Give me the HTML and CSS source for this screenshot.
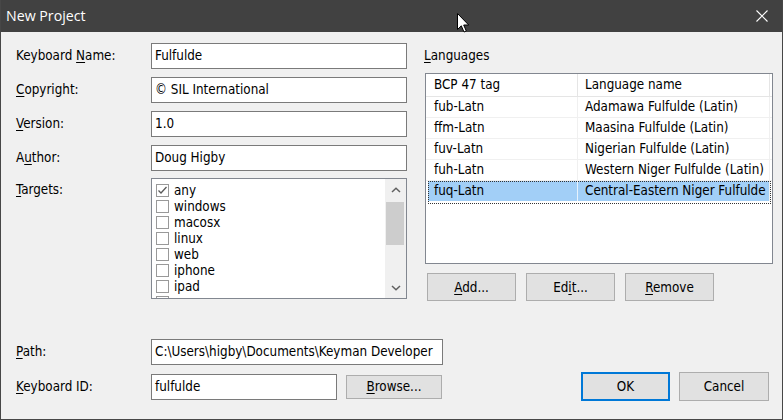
FILE: index.html
```html
<!DOCTYPE html>
<html>
<head>
<meta charset="utf-8">
<title>New Project</title>
<link rel="stylesheet" href="styles.css">
</head>
<body>
<div class="window">
  <div class="titlebar">
    <span class="title">New Project</span>
    <svg class="close" width="12" height="12" viewBox="0 0 12 12"><path d="M0.5 0.5 L11.5 11.5 M11.5 0.5 L0.5 11.5" stroke="#ffffff" stroke-width="1.1" fill="none"/></svg>
    <svg class="cursor" width="13" height="20" viewBox="0 0 13 20"><path d="M0.5 0.5 L0.5 16.5 L4.3 12.8 L7 19 L9.3 18 L6.7 12 L11.7 12 Z" fill="#ffffff" stroke="#000000" stroke-width="1" stroke-linejoin="miter"/></svg>
  </div>
  <div class="content">
    <div class="top">
      <div class="form">
        <div class="lbl">Keyboard <u>N</u>ame:</div>
        <div class="input">Fulfulde</div>
        <div class="lbl"><u>C</u>opyright:</div>
        <div class="input">© SIL International</div>
        <div class="lbl"><u>V</u>ersion:</div>
        <div class="input">1.0</div>
        <div class="lbl">A<u>u</u>thor:</div>
        <div class="input">Doug Higby</div>
        <div class="lbl lbl-top"><u>T</u>argets:</div>
        <div class="checklist">
          <div class="items">
            <div class="item"><span class="cb"><svg width="11" height="11" viewBox="0 0 11 11"><path d="M1.5 5.5 L4 8 L9.5 2" stroke="#5a5a5a" stroke-width="1.3" fill="none"/></svg></span>any</div>
            <div class="item"><span class="cb"></span>windows</div>
            <div class="item"><span class="cb"></span>macosx</div>
            <div class="item"><span class="cb"></span>linux</div>
            <div class="item"><span class="cb"></span>web</div>
            <div class="item"><span class="cb"></span>iphone</div>
            <div class="item"><span class="cb"></span>ipad</div>
            <div class="item"><span class="cb"></span></div>
          </div>
          <div class="scrollbar">
            <div class="sb-btn"><svg width="10" height="6" viewBox="0 0 10 6"><path d="M1 5 L5 1.2 L9 5" stroke="#606060" stroke-width="1.5" fill="none"/></svg></div>
            <div class="thumb"></div>
            <div class="sb-space"></div>
            <div class="sb-btn"><svg width="10" height="6" viewBox="0 0 10 6"><path d="M1 1 L5 4.8 L9 1" stroke="#606060" stroke-width="1.5" fill="none"/></svg></div>
          </div>
        </div>
      </div>
      <div class="langs">
        <div class="lbl"><u>L</u>anguages</div>
        <div class="listview">
          <div class="row head"><div class="c1">BCP 47 tag</div><div class="c2">Language name</div></div>
          <div class="row"><div class="c1">fub-Latn</div><div class="c2">Adamawa Fulfulde (Latin)</div></div>
          <div class="row"><div class="c1">ffm-Latn</div><div class="c2">Maasina Fulfulde (Latin)</div></div>
          <div class="row"><div class="c1">fuv-Latn</div><div class="c2">Nigerian Fulfulde (Latin)</div></div>
          <div class="row"><div class="c1">fuh-Latn</div><div class="c2">Western Niger Fulfulde (Latin)</div></div>
          <div class="row sel"><div class="c1">fuq-Latn</div><div class="c2">Central-Eastern Niger Fulfulde</div></div>
        </div>
        <div class="btnrow">
          <div class="btn"><span><u>A</u>dd...</span></div>
          <div class="btn"><span>Ed<u>i</u>t...</span></div>
          <div class="btn"><span><u>R</u>emove</span></div>
        </div>
      </div>
    </div>
    <div class="bottom">
      <div class="brow">
        <div class="lbl"><u>P</u>ath:</div>
        <div class="input path">C:\Users\higby\Documents\Keyman Developer</div>
      </div>
      <div class="brow brow2">
        <div class="lbl"><u>K</u>eyboard ID:</div>
        <div class="input kid">fulfulde</div>
        <div class="btn browse"><span><u>B</u>rowse...</span></div>
        <div class="btn ok"><span>OK</span></div>
        <div class="btn cancel"><span>Cancel</span></div>
      </div>
    </div>
  </div>
</div>
</body>
</html>
```
FILE: styles.css
```css
* { box-sizing: border-box; }
html, body { margin: 0; padding: 0; }
body {
  width: 783px;
  height: 420px;
  overflow: hidden;
  background: #f0f0f0;
  font-family: "DejaVu Sans Condensed", "DejaVu Sans", sans-serif;
  font-size: 13.33px;
  color: #000;
}
u { text-decoration: underline; text-underline-offset: 2px; }
.window {
  width: 783px;
  height: 420px;
  display: flex;
  flex-direction: column;
  border: 1px solid #474747;
  border-top: none;
  background: #f0f0f0;
}
.titlebar {
  height: 32px;
  flex-shrink: 0;
  background: #414141;
  position: relative;
  display: flex;
  align-items: center;
  padding-left: 5px;
  color: #ffffff;
  font-family: "Open Sans", "Noto Sans", sans-serif;
  font-size: 14.2px;
}
.title { position: relative; top: -1px; }
.close { margin-left: auto; margin-right: 14px; }
.cursor { position: absolute; left: 456px; top: 13px; }
.content {
  display: flex;
  flex-direction: column;
  padding: 11px 0 0 15px;
}
.top { display: flex; gap: 17px; height: 258px; }
.form {
  display: grid;
  grid-template-columns: 135px 256px;
  row-gap: 8px;
  align-content: start;
}
.lbl { height: 26px; line-height: 26px; white-space: nowrap; }
.lbl-top { height: auto; line-height: 16px; padding-top: 3px; }
.input {
  height: 26px;
  border: 1px solid #7a7a7a;
  background: #ffffff;
  padding: 0 3px;
  line-height: 24px;
  white-space: nowrap;
  overflow: hidden;
}
.checklist {
  margin-top: -1px;
  width: 256px;
  height: 121px;
  border: 1px solid #828790;
  background: #ffffff;
  display: flex;
}
.items { flex: 1; padding: 3px 0 0 4px; overflow: hidden; }
.item { height: 16px; display: flex; align-items: center; gap: 5px; white-space: nowrap; }
.cb {
  width: 13px;
  height: 13px;
  flex-shrink: 0;
  border: 1px solid #999999;
  background: #ffffff;
  display: flex;
}
.scrollbar { width: 21px; background: #f0f0f0; display: flex; flex-direction: column; }
.sb-btn { height: 21px; display: flex; align-items: center; justify-content: center; }
.thumb { margin: 2px 2px 0 1px; height: 43px; background: #cdcdcd; }
.sb-space { flex: 1; }
.langs { width: 349px; display: flex; flex-direction: column; }
.langs .lbl { margin-bottom: 4px; }
.listview {
  margin-left: 1px;
  width: 348px;
  height: 191px;
  border: 1px solid #828790;
  background: #ffffff;
}
.row { display: flex; height: 21px; line-height: 20px; border-bottom: 1px solid #f0f0f0; position: relative; }
.row.head { height: 23px; line-height: 22px; border-bottom-color: #e5e5e5; }
.c1 { width: 152px; padding-left: 8px; border-right: 1px solid #f0f0f0; white-space: nowrap; }
.c2 { width: 192px; padding-left: 7px; border-right: 1px solid #f0f0f0; white-space: nowrap; overflow: hidden; }
.row.head .c1, .row.head .c2 { border-right-color: #e5e5e5; }
.row.sel { background: linear-gradient(#a2cff7, #a2cff7) 2px 0 / 341px 100% no-repeat; border-bottom-color: #ffffff; }
.row.sel .c1 { border-right-color: #e6f2fc; }
.row.sel::after {
  content: "";
  position: absolute;
  left: 2px;
  top: 0;
  width: 341px;
  height: 21px;
  border: 1px dotted #333333;
}
.btnrow { display: flex; gap: 10px; margin-top: 9px; padding-left: 3px; }
.btn {
  width: 89px;
  height: 28px;
  background: #e1e1e1;
  border: 1px solid #adadad;
  display: flex;
  align-items: center;
  justify-content: center;
  white-space: nowrap;
}
.bottom { margin-top: 38px; display: flex; flex-direction: column; gap: 7px; }
.brow { display: flex; align-items: center; }
.brow .lbl { width: 135px; }
.brow2 { height: 29px; }
.path { width: 292px; }
.kid { width: 186px; }
.browse { width: 96px; height: 24px; margin-left: 9px; }
.ok { margin-left: auto; width: 89px; height: 29px; border: 2px solid #0078d7; }
.cancel { width: 90px; height: 29px; margin-left: 9px; margin-right: 13px; }
```
